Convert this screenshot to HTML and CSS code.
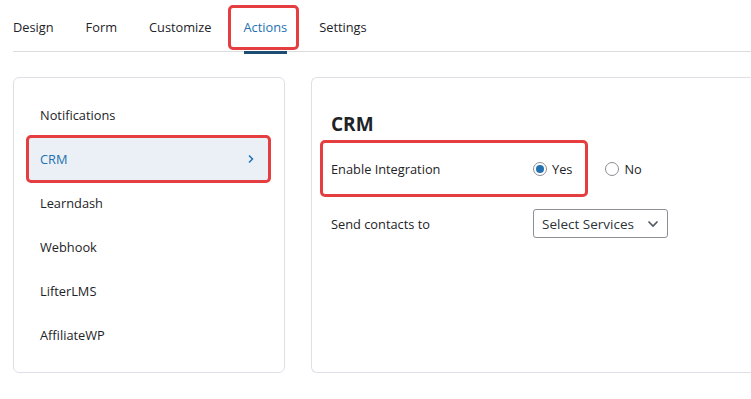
FILE: index.html
```html
<!DOCTYPE html>
<html lang="en">
<head>
    <meta charset="UTF-8">
    <meta name="viewport" content="width=device-width, initial-scale=1.0">
    <title>Form Actions</title>
    <link rel="stylesheet" href="styles.css">
</head>
<body>
    <div class="page">
        <nav class="tabs">
            <a class="tab">Design</a>
            <a class="tab">Form</a>
            <a class="tab">Customize</a>
            <a class="tab active">Actions<span class="mark mark-tab"></span></a>
            <a class="tab">Settings</a>
        </nav>

        <div class="panels">
            <div class="card side">
                <ul class="menu">
                    <li class="menu-item">Notifications</li>
                    <li class="menu-item active">
                        <span>CRM</span>
                        <svg class="chev" width="8" height="10" viewBox="0 0 8 10"><path d="M2 1.5 5.5 5 2 8.5" fill="none" stroke="#2271b1" stroke-width="1.5"/></svg>
                        <span class="mark mark-menu"></span>
                    </li>
                    <li class="menu-item">Learndash</li>
                    <li class="menu-item">Webhook</li>
                    <li class="menu-item">LifterLMS</li>
                    <li class="menu-item">AffiliateWP</li>
                </ul>
            </div>

            <div class="card main">
                <h2>CRM</h2>
                <div class="field">
                    <span class="mark mark-field"></span>
                    <div class="label">Enable Integration</div>
                    <div class="options">
                        <label class="radio"><span class="dot checked"></span>Yes</label>
                        <label class="radio no"><span class="dot"></span>No</label>
                    </div>
                </div>
                <div class="field">
                    <div class="label">Send contacts to</div>
                    <div class="select">
                        <span>Select Services</span>
                        <svg width="12" height="8" viewBox="0 0 12 8"><path d="M1.5 1.5 6 6 10.5 1.5" fill="none" stroke="#50575e" stroke-width="1.6"/></svg>
                    </div>
                </div>
            </div>
        </div>
    </div>
</body>
</html>
```

FILE: styles.css
```css
* {
    margin: 0;
    padding: 0;
    box-sizing: border-box;
}

body {
    font-family: "Open Sans", "Noto Sans", sans-serif;
    font-size: 12.8px;
    color: #1d2327;
    background: #fff;
}

.page {
    padding-left: 13px;
}

/* Tabs */
.tabs {
    display: flex;
    gap: 32px;
    height: 52px;
    border-bottom: 1px solid #dcdcde;
}

.tab {
    position: relative;
    display: flex;
    align-items: center;
    height: 52px;
    padding-top: 2px;
    color: #1d2327;
    cursor: pointer;
}

.tab.active {
    color: #2271b1;
}

.tab.active::after {
    content: '';
    position: absolute;
    left: 0;
    right: 0;
    bottom: -2px;
    height: 3px;
    background: #1e4d74;
}

/* red highlight marks */
.mark {
    position: absolute;
    border: 3px solid #e53e41;
    border-radius: 5px;
    pointer-events: none;
}

.mark-tab {
    top: 5px;
    left: -16px;
    right: -12px;
    bottom: 2px;
}

.panels {
    display: flex;
    gap: 26px;
    margin-top: 25px;
}

.card {
    border: 1px solid #dfdfe8;
    border-radius: 6px;
    height: 296px;
}

.side {
    width: 272px;
    flex-shrink: 0;
    padding: 15px 15px 0 13px;
}

.menu {
    list-style: none;
}

.menu-item {
    position: relative;
    display: flex;
    align-items: center;
    justify-content: space-between;
    height: 44px;
    padding: 0 14px 0 13px;
    cursor: pointer;
}

.menu-item.active {
    background: #eaf0f5;
    color: #2271b1;
}

.mark-menu {
    top: -2px;
    left: -1px;
    right: -2px;
    bottom: -2px;
}

.main {
    flex: 1;
    border-right: none;
    border-radius: 6px 0 0 6px;
    padding: 33px 0 0 19px;
}

.main h2 {
    font-size: 19px;
    font-weight: 700;
    line-height: 26px;
    margin-bottom: 4px;
}

.field {
    position: relative;
    display: flex;
    align-items: center;
    height: 55px;
}

.field .label {
    width: 202px;
}

.mark-field {
    left: -11px;
    width: 268px;
    height: 57px;
    top: -1px;
}

.options {
    display: flex;
    align-items: center;
    gap: 33px;
}

.radio {
    display: flex;
    align-items: center;
    gap: 5px;
}

.dot {
    width: 14px;
    height: 14px;
    border: 1px solid #8c8f94;
    border-radius: 50%;
    display: flex;
    align-items: center;
    justify-content: center;
}

.dot.checked::after {
    content: '';
    width: 8px;
    height: 8px;
    border-radius: 50%;
    background: #2271b1;
}

.select {
    display: flex;
    align-items: center;
    justify-content: space-between;
    width: 135px;
    height: 29px;
    padding: 0 8px 0 8px;
    border: 1px solid #8c8f94;
    border-radius: 3px;
    font-size: 13.5px;
    color: #2c3338;
}
```
